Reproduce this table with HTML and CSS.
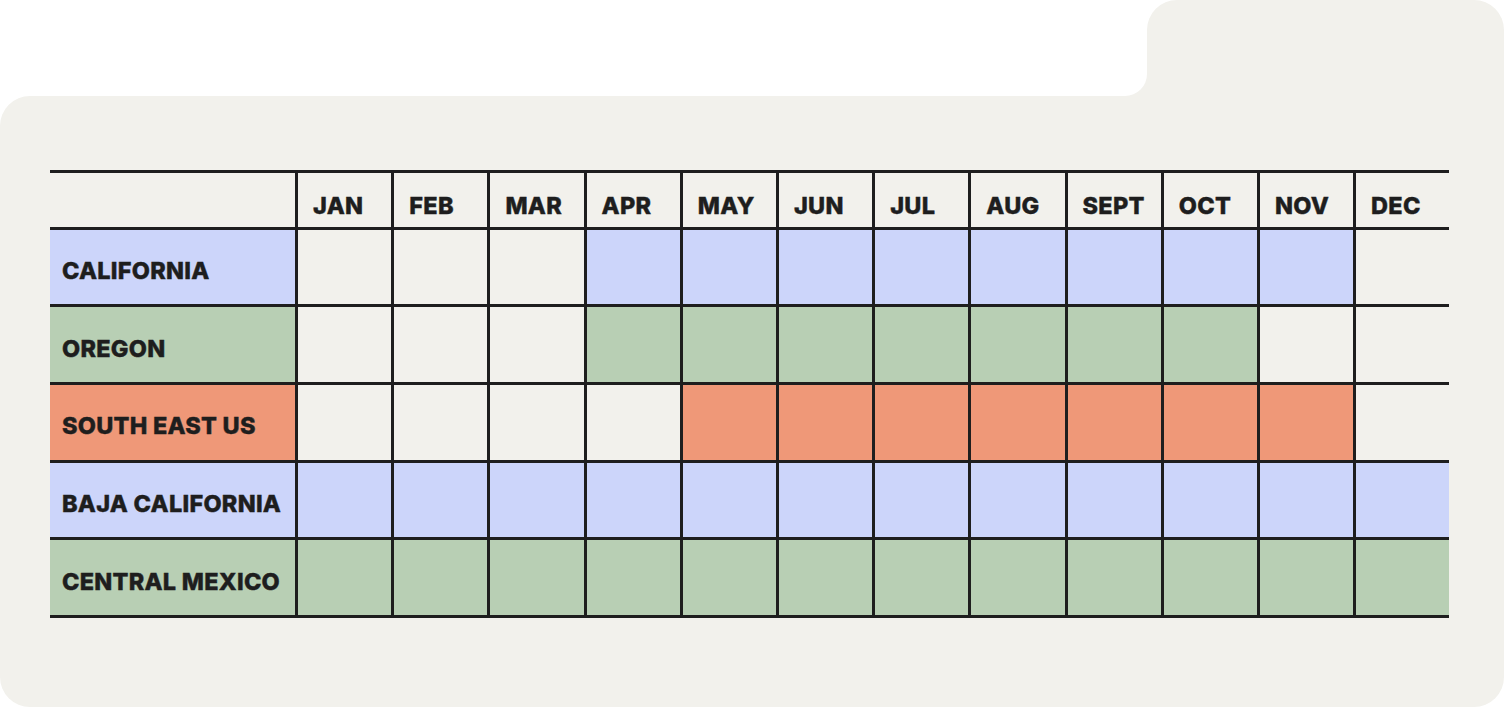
FILE: index.html
```html
<!DOCTYPE html>
<html lang="en">
<head>
<meta charset="utf-8">
<title>Season chart</title>
<link rel="stylesheet" href="styles.css">
</head>
<body>
<div class="card">
  <div class="card-top">
    <div class="notch"></div>
    <div class="tab"></div>
  </div>
  <div class="card-body">
    <div class="chart">
      <div class="cell head label"></div>
      <div class="cell head">JAN</div>
      <div class="cell head">FEB</div>
      <div class="cell head">MAR</div>
      <div class="cell head">APR</div>
      <div class="cell head">MAY</div>
      <div class="cell head">JUN</div>
      <div class="cell head">JUL</div>
      <div class="cell head">AUG</div>
      <div class="cell head">SEPT</div>
      <div class="cell head">OCT</div>
      <div class="cell head">NOV</div>
      <div class="cell head">DEC</div>

      <div class="cell label blue">CALIFORNIA</div>
      <div class="cell"></div><div class="cell"></div><div class="cell"></div>
      <div class="cell blue"></div><div class="cell blue"></div><div class="cell blue"></div><div class="cell blue"></div>
      <div class="cell blue"></div><div class="cell blue"></div><div class="cell blue"></div><div class="cell blue"></div>
      <div class="cell"></div>

      <div class="cell label green">OREGON</div>
      <div class="cell"></div><div class="cell"></div><div class="cell"></div>
      <div class="cell green"></div><div class="cell green"></div><div class="cell green"></div><div class="cell green"></div>
      <div class="cell green"></div><div class="cell green"></div><div class="cell green"></div>
      <div class="cell"></div><div class="cell"></div>

      <div class="cell label orange">SOUTH EAST US</div>
      <div class="cell"></div><div class="cell"></div><div class="cell"></div><div class="cell"></div>
      <div class="cell orange"></div><div class="cell orange"></div><div class="cell orange"></div><div class="cell orange"></div>
      <div class="cell orange"></div><div class="cell orange"></div><div class="cell orange"></div>
      <div class="cell"></div>

      <div class="cell label blue">BAJA CALIFORNIA</div>
      <div class="cell blue"></div><div class="cell blue"></div><div class="cell blue"></div><div class="cell blue"></div>
      <div class="cell blue"></div><div class="cell blue"></div><div class="cell blue"></div><div class="cell blue"></div>
      <div class="cell blue"></div><div class="cell blue"></div><div class="cell blue"></div><div class="cell blue"></div>

      <div class="cell label green">CENTRAL MEXICO</div>
      <div class="cell green"></div><div class="cell green"></div><div class="cell green"></div><div class="cell green"></div>
      <div class="cell green"></div><div class="cell green"></div><div class="cell green"></div><div class="cell green"></div>
      <div class="cell green"></div><div class="cell green"></div><div class="cell green"></div><div class="cell green"></div>
    </div>
  </div>
</div>
</body>
</html>
```

FILE: styles.css
```css
* { box-sizing: border-box; }
html, body {
  margin: 0;
  padding: 0;
  background: #ffffff;
}
body {
  font-family: "Inter", "Liberation Sans", sans-serif;
  color: #1e1e1e;
}
.card {
  width: 1504px;
  height: 707px;
  display: flex;
  flex-direction: column;
}
.card-top {
  height: 96px;
  display: flex;
  background: linear-gradient(to bottom, transparent 50px, #f2f1ec 50px);
}
.notch {
  flex: 1;
  background: #ffffff;
  border-bottom-right-radius: 22px;
}
.tab {
  width: 357px;
  background: #f2f1ec;
  border-radius: 30px 30px 0 0;
}
.card-body {
  flex: 1;
  background: #f2f1ec;
  border-radius: 30px 0 30px 30px;
  padding: 73.5px 0 0 50px;
}
.chart {
  display: grid;
  grid-template-columns: 245px repeat(12, 96.2px);
  grid-template-rows: 57px repeat(5, 77.7px);
  border-top: 3px solid #1e1e1e;
  width: max-content;
}
.cell {
  background: #f2f1ec;
  border-bottom: 3px solid #1e1e1e;
  border-left: 3px solid #1e1e1e;
}
.cell.label {
  border-left: none;
  display: flex;
  align-items: center;
  padding: 7px 0 0 12px;
  font-size: 23.5px;
  font-weight: 800;
  letter-spacing: 0.25px;
  -webkit-text-stroke: 0.4px #1e1e1e;
  white-space: nowrap;
}
.cell.head {
  display: flex;
  align-items: flex-end;
  padding: 0 0 7px 15px;
  font-size: 23.5px;
  font-weight: 800;
  letter-spacing: 0.3px;
  -webkit-text-stroke: 0.4px #1e1e1e;
}
.blue { background: #ccd5fa; }
.green { background: #b8cfb4; }
.orange { background: #ef9878; }
```
